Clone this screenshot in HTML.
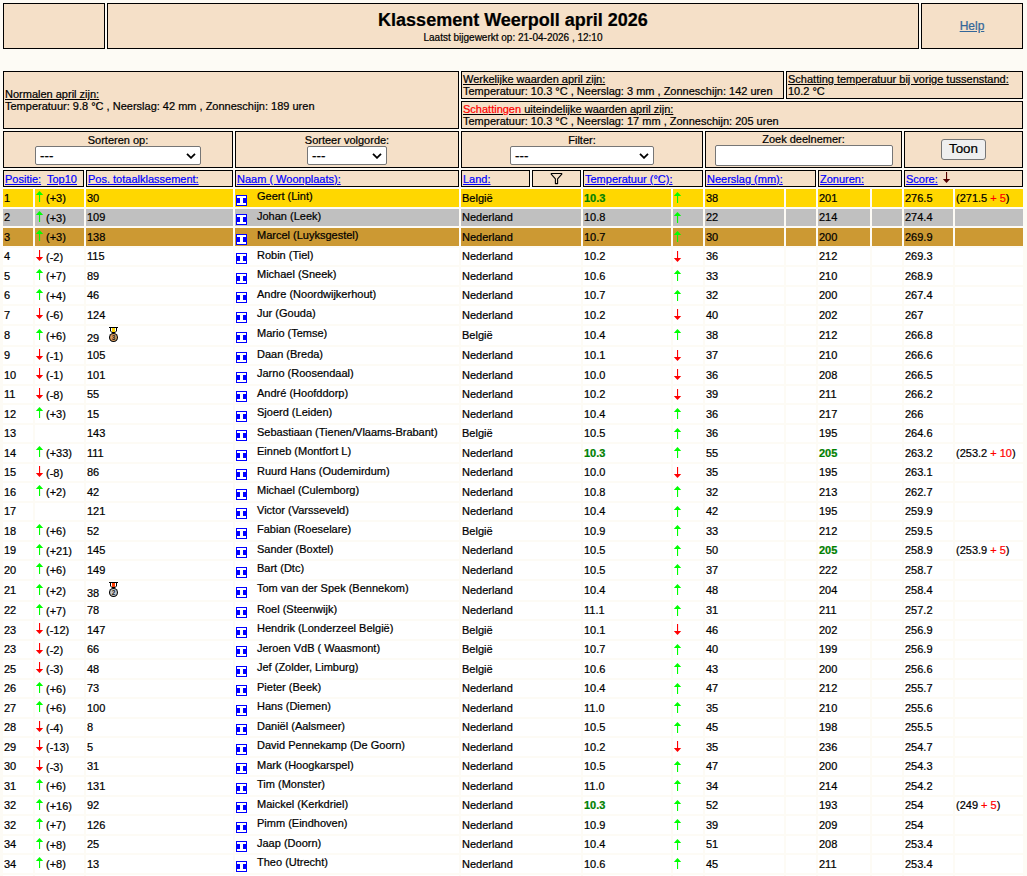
<!DOCTYPE html>
<html lang="nl">
<head>
<meta charset="utf-8">
<title>Klassement Weerpoll april 2026</title>
<style>
html,body{margin:0;padding:0}
body{width:1027px;height:876px;overflow:hidden;position:relative;background:#fdfbf5;font-family:"Liberation Sans",sans-serif;font-size:11px;color:#000;-webkit-text-stroke-width:.22px}
.b{position:absolute;box-sizing:border-box;border:1px solid #000;background:#f5e0c8;white-space:nowrap;overflow:hidden}
.b .x{position:absolute;left:1px;white-space:nowrap;line-height:13px}
u,a{text-decoration:underline}
a{color:#00f}
.ctr{left:0!important;right:0;text-align:center}
.title{font-size:18px;font-weight:bold;line-height:21px}
.sub{font-size:10px;line-height:12px}
.help{font-size:12px;color:#369;line-height:14px}
.red{color:#f00}
.sel{position:absolute;box-sizing:border-box;height:19px;top:14px;border:1px solid #767676;border-radius:2px;background:#fff;font-size:13.333px;line-height:17px;text-align:left;padding-left:4px}
.sel svg{position:absolute;right:4px;top:6px;width:10px;height:6px}
.inp{position:absolute;box-sizing:border-box;border:1px solid #767676;border-radius:2px;background:#fff}
.btn{position:absolute;box-sizing:border-box;border:1px solid #767676;border-radius:3px;background:#efefef;font-size:13.333px;line-height:18px;text-align:center}
/* data rows */
.r{position:absolute;left:0;width:1027px}
.c{position:absolute;top:0;bottom:0;background:#fff;overflow:hidden}
.gold .c{background:#ffd700}
.silv .c{background:#c0c0c0}
.brnz .c{background:#c93}
.t{position:absolute;left:1px;top:var(--o);height:18px;line-height:18px;white-space:nowrap}
.t2{left:11px;top:var(--o2)}
.tn{left:22px;top:var(--on)}
.tm{top:var(--om)}
.g{color:#008000;font-weight:bold}
.rd{color:#f00;font-weight:normal}
.ar{position:absolute;left:1px;top:var(--oa);width:7px;height:11px;overflow:visible}
.ab{top:var(--ob)}
.ic{position:absolute;left:1px;top:var(--oi);width:11px;height:11px}
.md{position:absolute;left:23px;top:var(--omd);width:9px;height:15px}
.k0{left:3px;width:30px}
.k1{left:35px;width:49px}
.k2{left:86px;width:147px}
.k3{left:235px;width:224px}
.k4{left:461px;width:120px}
.k5{left:583px;width:88px}
.k6{left:673px;width:30px}
.k7{left:705px;width:79px}
.k8{left:786px;width:30px}
.k9{left:818px;width:52px}
.k10{left:872px;width:30px}
.k11{left:904px;width:49px}
.k12{left:955px;width:68px}
</style>
</head>
<body>
<!-- title row -->
<div class="b" style="left:3px;top:3px;width:102px;height:46px"></div>
<div class="b" style="left:107px;top:3px;width:812px;height:46px">
  <div class="x ctr title" style="top:10px">Klassement Weerpoll april 2026</div>
  <div class="x ctr sub" style="top:27px">Laatst bijgewerkt op: 21-04-2026 , 12:10</div>
</div>
<div class="b" style="left:921px;top:3px;width:102px;height:46px">
  <div class="x ctr help" style="top:15px"><a class="help">Help</a></div>
</div>
<!-- info row -->
<div class="b" style="left:3px;top:71px;width:456px;height:58px">
  <div class="x" style="top:16px"><u>Normalen april zijn:</u></div>
  <div class="x" style="top:28px">Temperatuur: 9.8 °C , Neerslag: 42 mm , Zonneschijn: 189 uren</div>
</div>
<div class="b" style="left:461px;top:71px;width:323px;height:28px">
  <div class="x" style="top:1px"><u>Werkelijke waarden april zijn:</u></div>
  <div class="x" style="top:13px">Temperatuur: 10.3 °C , Neerslag: 3 mm , Zonneschijn: 142 uren</div>
</div>
<div class="b" style="left:786px;top:71px;width:237px;height:28px">
  <div class="x" style="top:1px"><u>Schatting temperatuur bij vorige tussenstand:</u></div>
  <div class="x" style="top:13px">10.2 °C</div>
</div>
<div class="b" style="left:461px;top:101px;width:562px;height:28px">
  <div class="x" style="top:1px"><u><span class="red">Schattingen</span> uiteindelijke waarden april zijn:</u></div>
  <div class="x" style="top:13px">Temperatuur: 10.3 °C , Neerslag: 17 mm , Zonneschijn: 205 uren</div>
</div>
<!-- controls row -->
<div class="b" style="left:3px;top:131px;width:230px;height:37px">
  <div class="x ctr" style="top:2px">Sorteren op:</div>
  <div class="sel" style="left:31px;width:166px">---<svg viewBox="0 0 10 6"><path d="M1 .8L5 4.8L9 .8" fill="none" stroke="#000" stroke-width="1.8"/></svg></div>
</div>
<div class="b" style="left:235px;top:131px;width:224px;height:37px">
  <div class="x ctr" style="top:2px">Sorteer volgorde:</div>
  <div class="sel" style="left:71px;width:80px">---<svg viewBox="0 0 10 6"><path d="M1 .8L5 4.8L9 .8" fill="none" stroke="#000" stroke-width="1.8"/></svg></div>
</div>
<div class="b" style="left:461px;top:131px;width:242px;height:37px">
  <div class="x ctr" style="top:2px">Filter:</div>
  <div class="sel" style="left:48px;width:144px">---<svg viewBox="0 0 10 6"><path d="M1 .8L5 4.8L9 .8" fill="none" stroke="#000" stroke-width="1.8"/></svg></div>
</div>
<div class="b" style="left:705px;top:131px;width:197px;height:37px">
  <div class="x ctr" style="top:1px">Zoek deelnemer:</div>
  <div class="inp" style="left:9px;top:13px;width:178px;height:21px"></div>
</div>
<div class="b" style="left:904px;top:131px;width:119px;height:37px">
  <div class="btn" style="left:36px;top:7px;width:45px;height:21px">Toon</div>
</div>
<!-- header row -->
<div class="b" style="left:3px;top:170px;width:81px;height:17px"><div class="x" style="top:2px"><a>Positie:</a>&nbsp; <a>Top10</a></div></div>
<div class="b" style="left:86px;top:170px;width:147px;height:17px"><div class="x" style="top:2px"><a>Pos. totaalklassement:</a></div></div>
<div class="b" style="left:235px;top:170px;width:224px;height:17px"><div class="x" style="top:2px"><a>Naam ( Woonplaats):</a></div></div>
<div class="b" style="left:461px;top:170px;width:69px;height:17px"><div class="x" style="top:2px"><a>Land:</a></div></div>
<div class="b" style="left:532px;top:170px;width:49px;height:17px">
  <svg style="position:absolute;left:17px;top:1px;width:13px;height:13px" viewBox="0 0 13 13"><path d="M1.2 1.5h10.6v.7L7.6 6.8v4.8h-2.2v-4.8L1.2 2.2z" fill="none" stroke="#000" stroke-width="1.1" stroke-linejoin="round"/></svg>
</div>
<div class="b" style="left:583px;top:170px;width:120px;height:17px"><div class="x" style="top:2px"><a>Temperatuur (°C):</a></div></div>
<div class="b" style="left:705px;top:170px;width:111px;height:17px"><div class="x" style="top:2px"><a>Neerslag (mm):</a></div></div>
<div class="b" style="left:818px;top:170px;width:84px;height:17px"><div class="x" style="top:2px"><a>Zonuren:</a></div></div>
<div class="b" style="left:904px;top:170px;width:119px;height:17px"><div class="x" style="top:2px"><a>Score:</a></div>
  <svg style="position:absolute;left:38px;top:1px;width:7px;height:11px;overflow:visible" viewBox="0 0 7 11"><path d="M3.5 11L7.2 7H-.2z" fill="#500"/><rect x="3" y="0" width="1.1" height="9" fill="#500"/></svg>
</div>
<div class="r gold" style="top:189px;height:18px;--o:0px;--oa:2px;--o2:0px;--ob:3px;--on:-2px;--oi:6px"><div class="c k0"><span class="t">1</span></div><div class="c k1"><svg class="ar" viewBox="0 0 7 11"><path d="M3.5 0L7.2 4H-.2z" fill="#0f0"/><rect x="3" y="2" width="1.1" height="9" fill="#0f0"/></svg><span class="t t2">(+3)</span></div><div class="c k2"><span class="t">30</span></div><div class="c k3"><svg class="ic" viewBox="0 0 11 11"><rect width="11" height="11" fill="#00f"/><path d="M1 1h9v2h-3v5h3v2h-9v-2h3v-5h-3z" fill="#fff"/></svg><span class="t tn">Geert (Lint)</span></div><div class="c k4"><span class="t">België</span></div><div class="c k5"><span class="t g">10.3</span></div><div class="c k6"><svg class="ar ab" viewBox="0 0 7 11"><path d="M3.5 0L7.2 4H-.2z" fill="#0f0"/><rect x="3" y="2" width="1.1" height="9" fill="#0f0"/></svg></div><div class="c k7"><span class="t">38</span></div><div class="c k8"></div><div class="c k9"><span class="t">201</span></div><div class="c k10"></div><div class="c k11"><span class="t">276.5</span></div><div class="c k12"><span class="t">(271.5 <b class="rd">+ 5</b>)</span></div></div>
<div class="r silv" style="top:209px;height:17px;--o:-1px;--oa:2px;--o2:0px;--ob:3px;--on:-2px;--oi:5px"><div class="c k0"><span class="t">2</span></div><div class="c k1"><svg class="ar" viewBox="0 0 7 11"><path d="M3.5 0L7.2 4H-.2z" fill="#0f0"/><rect x="3" y="2" width="1.1" height="9" fill="#0f0"/></svg><span class="t t2">(+3)</span></div><div class="c k2"><span class="t">109</span></div><div class="c k3"><svg class="ic" viewBox="0 0 11 11"><rect width="11" height="11" fill="#00f"/><path d="M1 1h9v2h-3v5h3v2h-9v-2h3v-5h-3z" fill="#fff"/></svg><span class="t tn">Johan (Leek)</span></div><div class="c k4"><span class="t">Nederland</span></div><div class="c k5"><span class="t">10.8</span></div><div class="c k6"><svg class="ar ab" viewBox="0 0 7 11"><path d="M3.5 0L7.2 4H-.2z" fill="#0f0"/><rect x="3" y="2" width="1.1" height="9" fill="#0f0"/></svg></div><div class="c k7"><span class="t">22</span></div><div class="c k8"></div><div class="c k9"><span class="t">214</span></div><div class="c k10"></div><div class="c k11"><span class="t">274.4</span></div><div class="c k12"></div></div>
<div class="r brnz" style="top:228px;height:18px;--o:0px;--oa:2px;--o2:0px;--ob:3px;--on:-2px;--oi:6px"><div class="c k0"><span class="t">3</span></div><div class="c k1"><svg class="ar" viewBox="0 0 7 11"><path d="M3.5 0L7.2 4H-.2z" fill="#0f0"/><rect x="3" y="2" width="1.1" height="9" fill="#0f0"/></svg><span class="t t2">(+3)</span></div><div class="c k2"><span class="t">138</span></div><div class="c k3"><svg class="ic" viewBox="0 0 11 11"><rect width="11" height="11" fill="#00f"/><path d="M1 1h9v2h-3v5h3v2h-9v-2h3v-5h-3z" fill="#fff"/></svg><span class="t tn">Marcel (Luyksgestel)</span></div><div class="c k4"><span class="t">Nederland</span></div><div class="c k5"><span class="t">10.7</span></div><div class="c k6"><svg class="ar ab" viewBox="0 0 7 11"><path d="M3.5 0L7.2 4H-.2z" fill="#0f0"/><rect x="3" y="2" width="1.1" height="9" fill="#0f0"/></svg></div><div class="c k7"><span class="t">30</span></div><div class="c k8"></div><div class="c k9"><span class="t">200</span></div><div class="c k10"></div><div class="c k11"><span class="t">269.9</span></div><div class="c k12"></div></div>
<div class="r" style="top:248px;height:17px;--o:-1px;--oa:2px;--o2:0px;--ob:3px;--on:-2px;--oi:5px"><div class="c k0"><span class="t">4</span></div><div class="c k1"><svg class="ar" viewBox="0 0 7 11"><path d="M3.5 11L7.2 7H-.2z" fill="#f00"/><rect x="3" y="0" width="1.1" height="9" fill="#f00"/></svg><span class="t t2">(-2)</span></div><div class="c k2"><span class="t">115</span></div><div class="c k3"><svg class="ic" viewBox="0 0 11 11"><rect width="11" height="11" fill="#00f"/><path d="M1 1h9v2h-3v5h3v2h-9v-2h3v-5h-3z" fill="#fff"/></svg><span class="t tn">Robin (Tiel)</span></div><div class="c k4"><span class="t">Nederland</span></div><div class="c k5"><span class="t">10.2</span></div><div class="c k6"><svg class="ar ab" viewBox="0 0 7 11"><path d="M3.5 11L7.2 7H-.2z" fill="#f00"/><rect x="3" y="0" width="1.1" height="9" fill="#f00"/></svg></div><div class="c k7"><span class="t">36</span></div><div class="c k8"></div><div class="c k9"><span class="t">212</span></div><div class="c k10"></div><div class="c k11"><span class="t">269.3</span></div><div class="c k12"></div></div>
<div class="r" style="top:267px;height:18px;--o:0px;--oa:2px;--o2:0px;--ob:3px;--on:-2px;--oi:6px"><div class="c k0"><span class="t">5</span></div><div class="c k1"><svg class="ar" viewBox="0 0 7 11"><path d="M3.5 0L7.2 4H-.2z" fill="#0f0"/><rect x="3" y="2" width="1.1" height="9" fill="#0f0"/></svg><span class="t t2">(+7)</span></div><div class="c k2"><span class="t">89</span></div><div class="c k3"><svg class="ic" viewBox="0 0 11 11"><rect width="11" height="11" fill="#00f"/><path d="M1 1h9v2h-3v5h3v2h-9v-2h3v-5h-3z" fill="#fff"/></svg><span class="t tn">Michael (Sneek)</span></div><div class="c k4"><span class="t">Nederland</span></div><div class="c k5"><span class="t">10.6</span></div><div class="c k6"><svg class="ar ab" viewBox="0 0 7 11"><path d="M3.5 0L7.2 4H-.2z" fill="#0f0"/><rect x="3" y="2" width="1.1" height="9" fill="#0f0"/></svg></div><div class="c k7"><span class="t">33</span></div><div class="c k8"></div><div class="c k9"><span class="t">210</span></div><div class="c k10"></div><div class="c k11"><span class="t">268.9</span></div><div class="c k12"></div></div>
<div class="r" style="top:287px;height:17px;--o:-1px;--oa:2px;--o2:0px;--ob:3px;--on:-2px;--oi:5px"><div class="c k0"><span class="t">6</span></div><div class="c k1"><svg class="ar" viewBox="0 0 7 11"><path d="M3.5 0L7.2 4H-.2z" fill="#0f0"/><rect x="3" y="2" width="1.1" height="9" fill="#0f0"/></svg><span class="t t2">(+4)</span></div><div class="c k2"><span class="t">46</span></div><div class="c k3"><svg class="ic" viewBox="0 0 11 11"><rect width="11" height="11" fill="#00f"/><path d="M1 1h9v2h-3v5h3v2h-9v-2h3v-5h-3z" fill="#fff"/></svg><span class="t tn">Andre (Noordwijkerhout)</span></div><div class="c k4"><span class="t">Nederland</span></div><div class="c k5"><span class="t">10.7</span></div><div class="c k6"><svg class="ar ab" viewBox="0 0 7 11"><path d="M3.5 0L7.2 4H-.2z" fill="#0f0"/><rect x="3" y="2" width="1.1" height="9" fill="#0f0"/></svg></div><div class="c k7"><span class="t">32</span></div><div class="c k8"></div><div class="c k9"><span class="t">200</span></div><div class="c k10"></div><div class="c k11"><span class="t">267.4</span></div><div class="c k12"></div></div>
<div class="r" style="top:306px;height:18px;--o:0px;--oa:2px;--o2:0px;--ob:3px;--on:-2px;--oi:6px"><div class="c k0"><span class="t">7</span></div><div class="c k1"><svg class="ar" viewBox="0 0 7 11"><path d="M3.5 11L7.2 7H-.2z" fill="#f00"/><rect x="3" y="0" width="1.1" height="9" fill="#f00"/></svg><span class="t t2">(-6)</span></div><div class="c k2"><span class="t">124</span></div><div class="c k3"><svg class="ic" viewBox="0 0 11 11"><rect width="11" height="11" fill="#00f"/><path d="M1 1h9v2h-3v5h3v2h-9v-2h3v-5h-3z" fill="#fff"/></svg><span class="t tn">Jur (Gouda)</span></div><div class="c k4"><span class="t">Nederland</span></div><div class="c k5"><span class="t">10.2</span></div><div class="c k6"><svg class="ar ab" viewBox="0 0 7 11"><path d="M3.5 11L7.2 7H-.2z" fill="#f00"/><rect x="3" y="0" width="1.1" height="9" fill="#f00"/></svg></div><div class="c k7"><span class="t">40</span></div><div class="c k8"></div><div class="c k9"><span class="t">202</span></div><div class="c k10"></div><div class="c k11"><span class="t">267</span></div><div class="c k12"></div></div>
<div class="r" style="top:326px;height:19px;--o:0px;--oa:3px;--o2:1px;--ob:3px;--on:-2px;--oi:6px;--om:3px;--omd:1px"><div class="c k0"><span class="t">8</span></div><div class="c k1"><svg class="ar" viewBox="0 0 7 11"><path d="M3.5 0L7.2 4H-.2z" fill="#0f0"/><rect x="3" y="2" width="1.1" height="9" fill="#0f0"/></svg><span class="t t2">(+6)</span></div><div class="c k2"><span class="t tm">29</span><svg class="md" viewBox="0 0 9 15"><rect width="9" height="1" fill="#000"/><path d="M1 1h7v3l-2 2h-3l-2-2z" fill="#000"/><path d="M2 1h5v3l-1 1h-3l-1-1z" fill="#fff"/><rect x="3" y="1" width="3" height="4" fill="#ffd800"/><circle cx="4.5" cy="10.5" r="4.5" fill="#000"/><circle cx="4.5" cy="10.5" r="3.4" fill="#dca060"/><text x="4.5" y="12.8" font-size="6.5" font-weight="bold" text-anchor="middle" font-family="Liberation Sans" fill="#222">3</text></svg></div><div class="c k3"><svg class="ic" viewBox="0 0 11 11"><rect width="11" height="11" fill="#00f"/><path d="M1 1h9v2h-3v5h3v2h-9v-2h3v-5h-3z" fill="#fff"/></svg><span class="t tn">Mario (Temse)</span></div><div class="c k4"><span class="t">België</span></div><div class="c k5"><span class="t">10.4</span></div><div class="c k6"><svg class="ar ab" viewBox="0 0 7 11"><path d="M3.5 0L7.2 4H-.2z" fill="#0f0"/><rect x="3" y="2" width="1.1" height="9" fill="#0f0"/></svg></div><div class="c k7"><span class="t">38</span></div><div class="c k8"></div><div class="c k9"><span class="t">212</span></div><div class="c k10"></div><div class="c k11"><span class="t">266.8</span></div><div class="c k12"></div></div>
<div class="r" style="top:347px;height:17px;--o:-1px;--oa:2px;--o2:0px;--ob:3px;--on:-2px;--oi:5px"><div class="c k0"><span class="t">9</span></div><div class="c k1"><svg class="ar" viewBox="0 0 7 11"><path d="M3.5 11L7.2 7H-.2z" fill="#f00"/><rect x="3" y="0" width="1.1" height="9" fill="#f00"/></svg><span class="t t2">(-1)</span></div><div class="c k2"><span class="t">105</span></div><div class="c k3"><svg class="ic" viewBox="0 0 11 11"><rect width="11" height="11" fill="#00f"/><path d="M1 1h9v2h-3v5h3v2h-9v-2h3v-5h-3z" fill="#fff"/></svg><span class="t tn">Daan (Breda)</span></div><div class="c k4"><span class="t">Nederland</span></div><div class="c k5"><span class="t">10.1</span></div><div class="c k6"><svg class="ar ab" viewBox="0 0 7 11"><path d="M3.5 11L7.2 7H-.2z" fill="#f00"/><rect x="3" y="0" width="1.1" height="9" fill="#f00"/></svg></div><div class="c k7"><span class="t">37</span></div><div class="c k8"></div><div class="c k9"><span class="t">210</span></div><div class="c k10"></div><div class="c k11"><span class="t">266.6</span></div><div class="c k12"></div></div>
<div class="r" style="top:366px;height:18px;--o:0px;--oa:2px;--o2:0px;--ob:3px;--on:-2px;--oi:6px"><div class="c k0"><span class="t">10</span></div><div class="c k1"><svg class="ar" viewBox="0 0 7 11"><path d="M3.5 11L7.2 7H-.2z" fill="#f00"/><rect x="3" y="0" width="1.1" height="9" fill="#f00"/></svg><span class="t t2">(-1)</span></div><div class="c k2"><span class="t">101</span></div><div class="c k3"><svg class="ic" viewBox="0 0 11 11"><rect width="11" height="11" fill="#00f"/><path d="M1 1h9v2h-3v5h3v2h-9v-2h3v-5h-3z" fill="#fff"/></svg><span class="t tn">Jarno (Roosendaal)</span></div><div class="c k4"><span class="t">Nederland</span></div><div class="c k5"><span class="t">10.0</span></div><div class="c k6"><svg class="ar ab" viewBox="0 0 7 11"><path d="M3.5 11L7.2 7H-.2z" fill="#f00"/><rect x="3" y="0" width="1.1" height="9" fill="#f00"/></svg></div><div class="c k7"><span class="t">36</span></div><div class="c k8"></div><div class="c k9"><span class="t">208</span></div><div class="c k10"></div><div class="c k11"><span class="t">266.5</span></div><div class="c k12"></div></div>
<div class="r" style="top:386px;height:17px;--o:-1px;--oa:2px;--o2:0px;--ob:3px;--on:-2px;--oi:5px"><div class="c k0"><span class="t">11</span></div><div class="c k1"><svg class="ar" viewBox="0 0 7 11"><path d="M3.5 11L7.2 7H-.2z" fill="#f00"/><rect x="3" y="0" width="1.1" height="9" fill="#f00"/></svg><span class="t t2">(-8)</span></div><div class="c k2"><span class="t">55</span></div><div class="c k3"><svg class="ic" viewBox="0 0 11 11"><rect width="11" height="11" fill="#00f"/><path d="M1 1h9v2h-3v5h3v2h-9v-2h3v-5h-3z" fill="#fff"/></svg><span class="t tn">André (Hoofddorp)</span></div><div class="c k4"><span class="t">Nederland</span></div><div class="c k5"><span class="t">10.2</span></div><div class="c k6"><svg class="ar ab" viewBox="0 0 7 11"><path d="M3.5 11L7.2 7H-.2z" fill="#f00"/><rect x="3" y="0" width="1.1" height="9" fill="#f00"/></svg></div><div class="c k7"><span class="t">39</span></div><div class="c k8"></div><div class="c k9"><span class="t">211</span></div><div class="c k10"></div><div class="c k11"><span class="t">266.2</span></div><div class="c k12"></div></div>
<div class="r" style="top:405px;height:18px;--o:0px;--oa:2px;--o2:0px;--ob:3px;--on:-2px;--oi:6px"><div class="c k0"><span class="t">12</span></div><div class="c k1"><svg class="ar" viewBox="0 0 7 11"><path d="M3.5 0L7.2 4H-.2z" fill="#0f0"/><rect x="3" y="2" width="1.1" height="9" fill="#0f0"/></svg><span class="t t2">(+3)</span></div><div class="c k2"><span class="t">15</span></div><div class="c k3"><svg class="ic" viewBox="0 0 11 11"><rect width="11" height="11" fill="#00f"/><path d="M1 1h9v2h-3v5h3v2h-9v-2h3v-5h-3z" fill="#fff"/></svg><span class="t tn">Sjoerd (Leiden)</span></div><div class="c k4"><span class="t">Nederland</span></div><div class="c k5"><span class="t">10.4</span></div><div class="c k6"><svg class="ar ab" viewBox="0 0 7 11"><path d="M3.5 0L7.2 4H-.2z" fill="#0f0"/><rect x="3" y="2" width="1.1" height="9" fill="#0f0"/></svg></div><div class="c k7"><span class="t">36</span></div><div class="c k8"></div><div class="c k9"><span class="t">217</span></div><div class="c k10"></div><div class="c k11"><span class="t">266</span></div><div class="c k12"></div></div>
<div class="r" style="top:425px;height:17px;--o:-1px;--oa:2px;--o2:0px;--ob:3px;--on:-2px;--oi:5px"><div class="c k0"><span class="t">13</span></div><div class="c k1"></div><div class="c k2"><span class="t">143</span></div><div class="c k3"><svg class="ic" viewBox="0 0 11 11"><rect width="11" height="11" fill="#00f"/><path d="M1 1h9v2h-3v5h3v2h-9v-2h3v-5h-3z" fill="#fff"/></svg><span class="t tn">Sebastiaan (Tienen/Vlaams-Brabant)</span></div><div class="c k4"><span class="t">België</span></div><div class="c k5"><span class="t">10.5</span></div><div class="c k6"><svg class="ar ab" viewBox="0 0 7 11"><path d="M3.5 0L7.2 4H-.2z" fill="#0f0"/><rect x="3" y="2" width="1.1" height="9" fill="#0f0"/></svg></div><div class="c k7"><span class="t">36</span></div><div class="c k8"></div><div class="c k9"><span class="t">195</span></div><div class="c k10"></div><div class="c k11"><span class="t">264.6</span></div><div class="c k12"></div></div>
<div class="r" style="top:444px;height:18px;--o:0px;--oa:2px;--o2:0px;--ob:3px;--on:-2px;--oi:6px"><div class="c k0"><span class="t">14</span></div><div class="c k1"><svg class="ar" viewBox="0 0 7 11"><path d="M3.5 0L7.2 4H-.2z" fill="#0f0"/><rect x="3" y="2" width="1.1" height="9" fill="#0f0"/></svg><span class="t t2">(+33)</span></div><div class="c k2"><span class="t">111</span></div><div class="c k3"><svg class="ic" viewBox="0 0 11 11"><rect width="11" height="11" fill="#00f"/><path d="M1 1h9v2h-3v5h3v2h-9v-2h3v-5h-3z" fill="#fff"/></svg><span class="t tn">Einneb (Montfort L)</span></div><div class="c k4"><span class="t">Nederland</span></div><div class="c k5"><span class="t g">10.3</span></div><div class="c k6"><svg class="ar ab" viewBox="0 0 7 11"><path d="M3.5 0L7.2 4H-.2z" fill="#0f0"/><rect x="3" y="2" width="1.1" height="9" fill="#0f0"/></svg></div><div class="c k7"><span class="t">55</span></div><div class="c k8"></div><div class="c k9"><span class="t g">205</span></div><div class="c k10"></div><div class="c k11"><span class="t">263.2</span></div><div class="c k12"><span class="t">(253.2 <b class="rd">+ 10</b>)</span></div></div>
<div class="r" style="top:464px;height:17px;--o:-1px;--oa:2px;--o2:0px;--ob:3px;--on:-2px;--oi:5px"><div class="c k0"><span class="t">15</span></div><div class="c k1"><svg class="ar" viewBox="0 0 7 11"><path d="M3.5 11L7.2 7H-.2z" fill="#f00"/><rect x="3" y="0" width="1.1" height="9" fill="#f00"/></svg><span class="t t2">(-8)</span></div><div class="c k2"><span class="t">86</span></div><div class="c k3"><svg class="ic" viewBox="0 0 11 11"><rect width="11" height="11" fill="#00f"/><path d="M1 1h9v2h-3v5h3v2h-9v-2h3v-5h-3z" fill="#fff"/></svg><span class="t tn">Ruurd Hans (Oudemirdum)</span></div><div class="c k4"><span class="t">Nederland</span></div><div class="c k5"><span class="t">10.0</span></div><div class="c k6"><svg class="ar ab" viewBox="0 0 7 11"><path d="M3.5 11L7.2 7H-.2z" fill="#f00"/><rect x="3" y="0" width="1.1" height="9" fill="#f00"/></svg></div><div class="c k7"><span class="t">35</span></div><div class="c k8"></div><div class="c k9"><span class="t">195</span></div><div class="c k10"></div><div class="c k11"><span class="t">263.1</span></div><div class="c k12"></div></div>
<div class="r" style="top:483px;height:18px;--o:0px;--oa:2px;--o2:0px;--ob:3px;--on:-2px;--oi:6px"><div class="c k0"><span class="t">16</span></div><div class="c k1"><svg class="ar" viewBox="0 0 7 11"><path d="M3.5 0L7.2 4H-.2z" fill="#0f0"/><rect x="3" y="2" width="1.1" height="9" fill="#0f0"/></svg><span class="t t2">(+2)</span></div><div class="c k2"><span class="t">42</span></div><div class="c k3"><svg class="ic" viewBox="0 0 11 11"><rect width="11" height="11" fill="#00f"/><path d="M1 1h9v2h-3v5h3v2h-9v-2h3v-5h-3z" fill="#fff"/></svg><span class="t tn">Michael (Culemborg)</span></div><div class="c k4"><span class="t">Nederland</span></div><div class="c k5"><span class="t">10.8</span></div><div class="c k6"><svg class="ar ab" viewBox="0 0 7 11"><path d="M3.5 0L7.2 4H-.2z" fill="#0f0"/><rect x="3" y="2" width="1.1" height="9" fill="#0f0"/></svg></div><div class="c k7"><span class="t">32</span></div><div class="c k8"></div><div class="c k9"><span class="t">213</span></div><div class="c k10"></div><div class="c k11"><span class="t">262.7</span></div><div class="c k12"></div></div>
<div class="r" style="top:503px;height:17px;--o:-1px;--oa:2px;--o2:0px;--ob:3px;--on:-2px;--oi:5px"><div class="c k0"><span class="t">17</span></div><div class="c k1"></div><div class="c k2"><span class="t">121</span></div><div class="c k3"><svg class="ic" viewBox="0 0 11 11"><rect width="11" height="11" fill="#00f"/><path d="M1 1h9v2h-3v5h3v2h-9v-2h3v-5h-3z" fill="#fff"/></svg><span class="t tn">Victor (Varsseveld)</span></div><div class="c k4"><span class="t">Nederland</span></div><div class="c k5"><span class="t">10.4</span></div><div class="c k6"><svg class="ar ab" viewBox="0 0 7 11"><path d="M3.5 0L7.2 4H-.2z" fill="#0f0"/><rect x="3" y="2" width="1.1" height="9" fill="#0f0"/></svg></div><div class="c k7"><span class="t">42</span></div><div class="c k8"></div><div class="c k9"><span class="t">195</span></div><div class="c k10"></div><div class="c k11"><span class="t">259.9</span></div><div class="c k12"></div></div>
<div class="r" style="top:522px;height:18px;--o:0px;--oa:2px;--o2:0px;--ob:3px;--on:-2px;--oi:6px"><div class="c k0"><span class="t">18</span></div><div class="c k1"><svg class="ar" viewBox="0 0 7 11"><path d="M3.5 0L7.2 4H-.2z" fill="#0f0"/><rect x="3" y="2" width="1.1" height="9" fill="#0f0"/></svg><span class="t t2">(+6)</span></div><div class="c k2"><span class="t">52</span></div><div class="c k3"><svg class="ic" viewBox="0 0 11 11"><rect width="11" height="11" fill="#00f"/><path d="M1 1h9v2h-3v5h3v2h-9v-2h3v-5h-3z" fill="#fff"/></svg><span class="t tn">Fabian (Roeselare)</span></div><div class="c k4"><span class="t">België</span></div><div class="c k5"><span class="t">10.9</span></div><div class="c k6"><svg class="ar ab" viewBox="0 0 7 11"><path d="M3.5 0L7.2 4H-.2z" fill="#0f0"/><rect x="3" y="2" width="1.1" height="9" fill="#0f0"/></svg></div><div class="c k7"><span class="t">33</span></div><div class="c k8"></div><div class="c k9"><span class="t">212</span></div><div class="c k10"></div><div class="c k11"><span class="t">259.5</span></div><div class="c k12"></div></div>
<div class="r" style="top:542px;height:17px;--o:-1px;--oa:2px;--o2:0px;--ob:3px;--on:-2px;--oi:5px"><div class="c k0"><span class="t">19</span></div><div class="c k1"><svg class="ar" viewBox="0 0 7 11"><path d="M3.5 0L7.2 4H-.2z" fill="#0f0"/><rect x="3" y="2" width="1.1" height="9" fill="#0f0"/></svg><span class="t t2">(+21)</span></div><div class="c k2"><span class="t">145</span></div><div class="c k3"><svg class="ic" viewBox="0 0 11 11"><rect width="11" height="11" fill="#00f"/><path d="M1 1h9v2h-3v5h3v2h-9v-2h3v-5h-3z" fill="#fff"/></svg><span class="t tn">Sander (Boxtel)</span></div><div class="c k4"><span class="t">Nederland</span></div><div class="c k5"><span class="t">10.5</span></div><div class="c k6"><svg class="ar ab" viewBox="0 0 7 11"><path d="M3.5 0L7.2 4H-.2z" fill="#0f0"/><rect x="3" y="2" width="1.1" height="9" fill="#0f0"/></svg></div><div class="c k7"><span class="t">50</span></div><div class="c k8"></div><div class="c k9"><span class="t g">205</span></div><div class="c k10"></div><div class="c k11"><span class="t">258.9</span></div><div class="c k12"><span class="t">(253.9 <b class="rd">+ 5</b>)</span></div></div>
<div class="r" style="top:561px;height:18px;--o:0px;--oa:2px;--o2:0px;--ob:3px;--on:-2px;--oi:6px"><div class="c k0"><span class="t">20</span></div><div class="c k1"><svg class="ar" viewBox="0 0 7 11"><path d="M3.5 0L7.2 4H-.2z" fill="#0f0"/><rect x="3" y="2" width="1.1" height="9" fill="#0f0"/></svg><span class="t t2">(+6)</span></div><div class="c k2"><span class="t">149</span></div><div class="c k3"><svg class="ic" viewBox="0 0 11 11"><rect width="11" height="11" fill="#00f"/><path d="M1 1h9v2h-3v5h3v2h-9v-2h3v-5h-3z" fill="#fff"/></svg><span class="t tn">Bart (Dtc)</span></div><div class="c k4"><span class="t">Nederland</span></div><div class="c k5"><span class="t">10.5</span></div><div class="c k6"><svg class="ar ab" viewBox="0 0 7 11"><path d="M3.5 0L7.2 4H-.2z" fill="#0f0"/><rect x="3" y="2" width="1.1" height="9" fill="#0f0"/></svg></div><div class="c k7"><span class="t">37</span></div><div class="c k8"></div><div class="c k9"><span class="t">222</span></div><div class="c k10"></div><div class="c k11"><span class="t">258.7</span></div><div class="c k12"></div></div>
<div class="r" style="top:581px;height:19px;--o:0px;--oa:3px;--o2:1px;--ob:3px;--on:-2px;--oi:6px;--om:3px;--omd:1px"><div class="c k0"><span class="t">21</span></div><div class="c k1"><svg class="ar" viewBox="0 0 7 11"><path d="M3.5 0L7.2 4H-.2z" fill="#0f0"/><rect x="3" y="2" width="1.1" height="9" fill="#0f0"/></svg><span class="t t2">(+2)</span></div><div class="c k2"><span class="t tm">38</span><svg class="md" viewBox="0 0 9 15"><rect width="9" height="1" fill="#000"/><path d="M1 1h7v3l-2 2h-3l-2-2z" fill="#000"/><path d="M2 1h5v3l-1 1h-3l-1-1z" fill="#fff"/><rect x="3" y="1" width="3" height="4" fill="#ff3c00"/><circle cx="4.5" cy="10.5" r="4.5" fill="#000"/><circle cx="4.5" cy="10.5" r="3.4" fill="#c4c8cc"/><text x="4.5" y="12.8" font-size="6.5" font-weight="bold" text-anchor="middle" font-family="Liberation Sans" fill="#222">2</text></svg></div><div class="c k3"><svg class="ic" viewBox="0 0 11 11"><rect width="11" height="11" fill="#00f"/><path d="M1 1h9v2h-3v5h3v2h-9v-2h3v-5h-3z" fill="#fff"/></svg><span class="t tn">Tom van der Spek (Bennekom)</span></div><div class="c k4"><span class="t">Nederland</span></div><div class="c k5"><span class="t">10.4</span></div><div class="c k6"><svg class="ar ab" viewBox="0 0 7 11"><path d="M3.5 0L7.2 4H-.2z" fill="#0f0"/><rect x="3" y="2" width="1.1" height="9" fill="#0f0"/></svg></div><div class="c k7"><span class="t">48</span></div><div class="c k8"></div><div class="c k9"><span class="t">204</span></div><div class="c k10"></div><div class="c k11"><span class="t">258.4</span></div><div class="c k12"></div></div>
<div class="r" style="top:602px;height:17px;--o:-1px;--oa:2px;--o2:0px;--ob:3px;--on:-2px;--oi:5px"><div class="c k0"><span class="t">22</span></div><div class="c k1"><svg class="ar" viewBox="0 0 7 11"><path d="M3.5 0L7.2 4H-.2z" fill="#0f0"/><rect x="3" y="2" width="1.1" height="9" fill="#0f0"/></svg><span class="t t2">(+7)</span></div><div class="c k2"><span class="t">78</span></div><div class="c k3"><svg class="ic" viewBox="0 0 11 11"><rect width="11" height="11" fill="#00f"/><path d="M1 1h9v2h-3v5h3v2h-9v-2h3v-5h-3z" fill="#fff"/></svg><span class="t tn">Roel (Steenwijk)</span></div><div class="c k4"><span class="t">Nederland</span></div><div class="c k5"><span class="t">11.1</span></div><div class="c k6"><svg class="ar ab" viewBox="0 0 7 11"><path d="M3.5 0L7.2 4H-.2z" fill="#0f0"/><rect x="3" y="2" width="1.1" height="9" fill="#0f0"/></svg></div><div class="c k7"><span class="t">31</span></div><div class="c k8"></div><div class="c k9"><span class="t">211</span></div><div class="c k10"></div><div class="c k11"><span class="t">257.2</span></div><div class="c k12"></div></div>
<div class="r" style="top:621px;height:18px;--o:0px;--oa:2px;--o2:0px;--ob:3px;--on:-2px;--oi:6px"><div class="c k0"><span class="t">23</span></div><div class="c k1"><svg class="ar" viewBox="0 0 7 11"><path d="M3.5 11L7.2 7H-.2z" fill="#f00"/><rect x="3" y="0" width="1.1" height="9" fill="#f00"/></svg><span class="t t2">(-12)</span></div><div class="c k2"><span class="t">147</span></div><div class="c k3"><svg class="ic" viewBox="0 0 11 11"><rect width="11" height="11" fill="#00f"/><path d="M1 1h9v2h-3v5h3v2h-9v-2h3v-5h-3z" fill="#fff"/></svg><span class="t tn">Hendrik (Londerzeel België)</span></div><div class="c k4"><span class="t">België</span></div><div class="c k5"><span class="t">10.1</span></div><div class="c k6"><svg class="ar ab" viewBox="0 0 7 11"><path d="M3.5 11L7.2 7H-.2z" fill="#f00"/><rect x="3" y="0" width="1.1" height="9" fill="#f00"/></svg></div><div class="c k7"><span class="t">46</span></div><div class="c k8"></div><div class="c k9"><span class="t">202</span></div><div class="c k10"></div><div class="c k11"><span class="t">256.9</span></div><div class="c k12"></div></div>
<div class="r" style="top:641px;height:17px;--o:-1px;--oa:2px;--o2:0px;--ob:3px;--on:-2px;--oi:5px"><div class="c k0"><span class="t">23</span></div><div class="c k1"><svg class="ar" viewBox="0 0 7 11"><path d="M3.5 11L7.2 7H-.2z" fill="#f00"/><rect x="3" y="0" width="1.1" height="9" fill="#f00"/></svg><span class="t t2">(-2)</span></div><div class="c k2"><span class="t">66</span></div><div class="c k3"><svg class="ic" viewBox="0 0 11 11"><rect width="11" height="11" fill="#00f"/><path d="M1 1h9v2h-3v5h3v2h-9v-2h3v-5h-3z" fill="#fff"/></svg><span class="t tn">Jeroen VdB ( Waasmont)</span></div><div class="c k4"><span class="t">België</span></div><div class="c k5"><span class="t">10.7</span></div><div class="c k6"><svg class="ar ab" viewBox="0 0 7 11"><path d="M3.5 0L7.2 4H-.2z" fill="#0f0"/><rect x="3" y="2" width="1.1" height="9" fill="#0f0"/></svg></div><div class="c k7"><span class="t">40</span></div><div class="c k8"></div><div class="c k9"><span class="t">199</span></div><div class="c k10"></div><div class="c k11"><span class="t">256.9</span></div><div class="c k12"></div></div>
<div class="r" style="top:660px;height:18px;--o:0px;--oa:2px;--o2:0px;--ob:3px;--on:-2px;--oi:6px"><div class="c k0"><span class="t">25</span></div><div class="c k1"><svg class="ar" viewBox="0 0 7 11"><path d="M3.5 11L7.2 7H-.2z" fill="#f00"/><rect x="3" y="0" width="1.1" height="9" fill="#f00"/></svg><span class="t t2">(-3)</span></div><div class="c k2"><span class="t">48</span></div><div class="c k3"><svg class="ic" viewBox="0 0 11 11"><rect width="11" height="11" fill="#00f"/><path d="M1 1h9v2h-3v5h3v2h-9v-2h3v-5h-3z" fill="#fff"/></svg><span class="t tn">Jef (Zolder, Limburg)</span></div><div class="c k4"><span class="t">België</span></div><div class="c k5"><span class="t">10.6</span></div><div class="c k6"><svg class="ar ab" viewBox="0 0 7 11"><path d="M3.5 0L7.2 4H-.2z" fill="#0f0"/><rect x="3" y="2" width="1.1" height="9" fill="#0f0"/></svg></div><div class="c k7"><span class="t">43</span></div><div class="c k8"></div><div class="c k9"><span class="t">200</span></div><div class="c k10"></div><div class="c k11"><span class="t">256.6</span></div><div class="c k12"></div></div>
<div class="r" style="top:680px;height:17px;--o:-1px;--oa:2px;--o2:0px;--ob:3px;--on:-2px;--oi:5px"><div class="c k0"><span class="t">26</span></div><div class="c k1"><svg class="ar" viewBox="0 0 7 11"><path d="M3.5 0L7.2 4H-.2z" fill="#0f0"/><rect x="3" y="2" width="1.1" height="9" fill="#0f0"/></svg><span class="t t2">(+6)</span></div><div class="c k2"><span class="t">73</span></div><div class="c k3"><svg class="ic" viewBox="0 0 11 11"><rect width="11" height="11" fill="#00f"/><path d="M1 1h9v2h-3v5h3v2h-9v-2h3v-5h-3z" fill="#fff"/></svg><span class="t tn">Pieter (Beek)</span></div><div class="c k4"><span class="t">Nederland</span></div><div class="c k5"><span class="t">10.4</span></div><div class="c k6"><svg class="ar ab" viewBox="0 0 7 11"><path d="M3.5 0L7.2 4H-.2z" fill="#0f0"/><rect x="3" y="2" width="1.1" height="9" fill="#0f0"/></svg></div><div class="c k7"><span class="t">47</span></div><div class="c k8"></div><div class="c k9"><span class="t">212</span></div><div class="c k10"></div><div class="c k11"><span class="t">255.7</span></div><div class="c k12"></div></div>
<div class="r" style="top:699px;height:18px;--o:0px;--oa:2px;--o2:0px;--ob:3px;--on:-2px;--oi:6px"><div class="c k0"><span class="t">27</span></div><div class="c k1"><svg class="ar" viewBox="0 0 7 11"><path d="M3.5 0L7.2 4H-.2z" fill="#0f0"/><rect x="3" y="2" width="1.1" height="9" fill="#0f0"/></svg><span class="t t2">(+6)</span></div><div class="c k2"><span class="t">100</span></div><div class="c k3"><svg class="ic" viewBox="0 0 11 11"><rect width="11" height="11" fill="#00f"/><path d="M1 1h9v2h-3v5h3v2h-9v-2h3v-5h-3z" fill="#fff"/></svg><span class="t tn">Hans (Diemen)</span></div><div class="c k4"><span class="t">Nederland</span></div><div class="c k5"><span class="t">11.0</span></div><div class="c k6"><svg class="ar ab" viewBox="0 0 7 11"><path d="M3.5 0L7.2 4H-.2z" fill="#0f0"/><rect x="3" y="2" width="1.1" height="9" fill="#0f0"/></svg></div><div class="c k7"><span class="t">35</span></div><div class="c k8"></div><div class="c k9"><span class="t">210</span></div><div class="c k10"></div><div class="c k11"><span class="t">255.6</span></div><div class="c k12"></div></div>
<div class="r" style="top:719px;height:17px;--o:-1px;--oa:2px;--o2:0px;--ob:3px;--on:-2px;--oi:5px"><div class="c k0"><span class="t">28</span></div><div class="c k1"><svg class="ar" viewBox="0 0 7 11"><path d="M3.5 11L7.2 7H-.2z" fill="#f00"/><rect x="3" y="0" width="1.1" height="9" fill="#f00"/></svg><span class="t t2">(-4)</span></div><div class="c k2"><span class="t">8</span></div><div class="c k3"><svg class="ic" viewBox="0 0 11 11"><rect width="11" height="11" fill="#00f"/><path d="M1 1h9v2h-3v5h3v2h-9v-2h3v-5h-3z" fill="#fff"/></svg><span class="t tn">Daniël (Aalsmeer)</span></div><div class="c k4"><span class="t">Nederland</span></div><div class="c k5"><span class="t">10.5</span></div><div class="c k6"><svg class="ar ab" viewBox="0 0 7 11"><path d="M3.5 0L7.2 4H-.2z" fill="#0f0"/><rect x="3" y="2" width="1.1" height="9" fill="#0f0"/></svg></div><div class="c k7"><span class="t">45</span></div><div class="c k8"></div><div class="c k9"><span class="t">198</span></div><div class="c k10"></div><div class="c k11"><span class="t">255.5</span></div><div class="c k12"></div></div>
<div class="r" style="top:738px;height:18px;--o:0px;--oa:2px;--o2:0px;--ob:3px;--on:-2px;--oi:6px"><div class="c k0"><span class="t">29</span></div><div class="c k1"><svg class="ar" viewBox="0 0 7 11"><path d="M3.5 11L7.2 7H-.2z" fill="#f00"/><rect x="3" y="0" width="1.1" height="9" fill="#f00"/></svg><span class="t t2">(-13)</span></div><div class="c k2"><span class="t">5</span></div><div class="c k3"><svg class="ic" viewBox="0 0 11 11"><rect width="11" height="11" fill="#00f"/><path d="M1 1h9v2h-3v5h3v2h-9v-2h3v-5h-3z" fill="#fff"/></svg><span class="t tn">David Pennekamp (De Goorn)</span></div><div class="c k4"><span class="t">Nederland</span></div><div class="c k5"><span class="t">10.2</span></div><div class="c k6"><svg class="ar ab" viewBox="0 0 7 11"><path d="M3.5 11L7.2 7H-.2z" fill="#f00"/><rect x="3" y="0" width="1.1" height="9" fill="#f00"/></svg></div><div class="c k7"><span class="t">35</span></div><div class="c k8"></div><div class="c k9"><span class="t">236</span></div><div class="c k10"></div><div class="c k11"><span class="t">254.7</span></div><div class="c k12"></div></div>
<div class="r" style="top:758px;height:17px;--o:-1px;--oa:2px;--o2:0px;--ob:3px;--on:-2px;--oi:5px"><div class="c k0"><span class="t">30</span></div><div class="c k1"><svg class="ar" viewBox="0 0 7 11"><path d="M3.5 11L7.2 7H-.2z" fill="#f00"/><rect x="3" y="0" width="1.1" height="9" fill="#f00"/></svg><span class="t t2">(-3)</span></div><div class="c k2"><span class="t">31</span></div><div class="c k3"><svg class="ic" viewBox="0 0 11 11"><rect width="11" height="11" fill="#00f"/><path d="M1 1h9v2h-3v5h3v2h-9v-2h3v-5h-3z" fill="#fff"/></svg><span class="t tn">Mark (Hoogkarspel)</span></div><div class="c k4"><span class="t">Nederland</span></div><div class="c k5"><span class="t">10.5</span></div><div class="c k6"><svg class="ar ab" viewBox="0 0 7 11"><path d="M3.5 0L7.2 4H-.2z" fill="#0f0"/><rect x="3" y="2" width="1.1" height="9" fill="#0f0"/></svg></div><div class="c k7"><span class="t">47</span></div><div class="c k8"></div><div class="c k9"><span class="t">200</span></div><div class="c k10"></div><div class="c k11"><span class="t">254.3</span></div><div class="c k12"></div></div>
<div class="r" style="top:777px;height:18px;--o:0px;--oa:2px;--o2:0px;--ob:3px;--on:-2px;--oi:6px"><div class="c k0"><span class="t">31</span></div><div class="c k1"><svg class="ar" viewBox="0 0 7 11"><path d="M3.5 0L7.2 4H-.2z" fill="#0f0"/><rect x="3" y="2" width="1.1" height="9" fill="#0f0"/></svg><span class="t t2">(+6)</span></div><div class="c k2"><span class="t">131</span></div><div class="c k3"><svg class="ic" viewBox="0 0 11 11"><rect width="11" height="11" fill="#00f"/><path d="M1 1h9v2h-3v5h3v2h-9v-2h3v-5h-3z" fill="#fff"/></svg><span class="t tn">Tim (Monster)</span></div><div class="c k4"><span class="t">Nederland</span></div><div class="c k5"><span class="t">11.0</span></div><div class="c k6"><svg class="ar ab" viewBox="0 0 7 11"><path d="M3.5 0L7.2 4H-.2z" fill="#0f0"/><rect x="3" y="2" width="1.1" height="9" fill="#0f0"/></svg></div><div class="c k7"><span class="t">34</span></div><div class="c k8"></div><div class="c k9"><span class="t">214</span></div><div class="c k10"></div><div class="c k11"><span class="t">254.2</span></div><div class="c k12"></div></div>
<div class="r" style="top:797px;height:17px;--o:-1px;--oa:2px;--o2:0px;--ob:3px;--on:-2px;--oi:5px"><div class="c k0"><span class="t">32</span></div><div class="c k1"><svg class="ar" viewBox="0 0 7 11"><path d="M3.5 0L7.2 4H-.2z" fill="#0f0"/><rect x="3" y="2" width="1.1" height="9" fill="#0f0"/></svg><span class="t t2">(+16)</span></div><div class="c k2"><span class="t">92</span></div><div class="c k3"><svg class="ic" viewBox="0 0 11 11"><rect width="11" height="11" fill="#00f"/><path d="M1 1h9v2h-3v5h3v2h-9v-2h3v-5h-3z" fill="#fff"/></svg><span class="t tn">Maickel (Kerkdriel)</span></div><div class="c k4"><span class="t">Nederland</span></div><div class="c k5"><span class="t g">10.3</span></div><div class="c k6"><svg class="ar ab" viewBox="0 0 7 11"><path d="M3.5 0L7.2 4H-.2z" fill="#0f0"/><rect x="3" y="2" width="1.1" height="9" fill="#0f0"/></svg></div><div class="c k7"><span class="t">52</span></div><div class="c k8"></div><div class="c k9"><span class="t">193</span></div><div class="c k10"></div><div class="c k11"><span class="t">254</span></div><div class="c k12"><span class="t">(249 <b class="rd">+ 5</b>)</span></div></div>
<div class="r" style="top:816px;height:18px;--o:0px;--oa:2px;--o2:0px;--ob:3px;--on:-2px;--oi:6px"><div class="c k0"><span class="t">32</span></div><div class="c k1"><svg class="ar" viewBox="0 0 7 11"><path d="M3.5 0L7.2 4H-.2z" fill="#0f0"/><rect x="3" y="2" width="1.1" height="9" fill="#0f0"/></svg><span class="t t2">(+7)</span></div><div class="c k2"><span class="t">126</span></div><div class="c k3"><svg class="ic" viewBox="0 0 11 11"><rect width="11" height="11" fill="#00f"/><path d="M1 1h9v2h-3v5h3v2h-9v-2h3v-5h-3z" fill="#fff"/></svg><span class="t tn">Pimm (Eindhoven)</span></div><div class="c k4"><span class="t">Nederland</span></div><div class="c k5"><span class="t">10.9</span></div><div class="c k6"><svg class="ar ab" viewBox="0 0 7 11"><path d="M3.5 0L7.2 4H-.2z" fill="#0f0"/><rect x="3" y="2" width="1.1" height="9" fill="#0f0"/></svg></div><div class="c k7"><span class="t">39</span></div><div class="c k8"></div><div class="c k9"><span class="t">209</span></div><div class="c k10"></div><div class="c k11"><span class="t">254</span></div><div class="c k12"></div></div>
<div class="r" style="top:836px;height:17px;--o:-1px;--oa:2px;--o2:0px;--ob:3px;--on:-2px;--oi:5px"><div class="c k0"><span class="t">34</span></div><div class="c k1"><svg class="ar" viewBox="0 0 7 11"><path d="M3.5 0L7.2 4H-.2z" fill="#0f0"/><rect x="3" y="2" width="1.1" height="9" fill="#0f0"/></svg><span class="t t2">(+8)</span></div><div class="c k2"><span class="t">25</span></div><div class="c k3"><svg class="ic" viewBox="0 0 11 11"><rect width="11" height="11" fill="#00f"/><path d="M1 1h9v2h-3v5h3v2h-9v-2h3v-5h-3z" fill="#fff"/></svg><span class="t tn">Jaap (Doorn)</span></div><div class="c k4"><span class="t">Nederland</span></div><div class="c k5"><span class="t">10.4</span></div><div class="c k6"><svg class="ar ab" viewBox="0 0 7 11"><path d="M3.5 0L7.2 4H-.2z" fill="#0f0"/><rect x="3" y="2" width="1.1" height="9" fill="#0f0"/></svg></div><div class="c k7"><span class="t">51</span></div><div class="c k8"></div><div class="c k9"><span class="t">208</span></div><div class="c k10"></div><div class="c k11"><span class="t">253.4</span></div><div class="c k12"></div></div>
<div class="r" style="top:855px;height:18px;--o:0px;--oa:2px;--o2:0px;--ob:3px;--on:-2px;--oi:6px"><div class="c k0"><span class="t">34</span></div><div class="c k1"><svg class="ar" viewBox="0 0 7 11"><path d="M3.5 0L7.2 4H-.2z" fill="#0f0"/><rect x="3" y="2" width="1.1" height="9" fill="#0f0"/></svg><span class="t t2">(+8)</span></div><div class="c k2"><span class="t">13</span></div><div class="c k3"><svg class="ic" viewBox="0 0 11 11"><rect width="11" height="11" fill="#00f"/><path d="M1 1h9v2h-3v5h3v2h-9v-2h3v-5h-3z" fill="#fff"/></svg><span class="t tn">Theo (Utrecht)</span></div><div class="c k4"><span class="t">Nederland</span></div><div class="c k5"><span class="t">10.6</span></div><div class="c k6"><svg class="ar ab" viewBox="0 0 7 11"><path d="M3.5 0L7.2 4H-.2z" fill="#0f0"/><rect x="3" y="2" width="1.1" height="9" fill="#0f0"/></svg></div><div class="c k7"><span class="t">45</span></div><div class="c k8"></div><div class="c k9"><span class="t">211</span></div><div class="c k10"></div><div class="c k11"><span class="t">253.4</span></div><div class="c k12"></div></div>
<div class="r" style="top:875px;height:18px"><div class="c k0"></div><div class="c k1"></div><div class="c k2"></div><div class="c k3"></div><div class="c k4"></div><div class="c k5"></div><div class="c k6"></div><div class="c k7"></div><div class="c k8"></div><div class="c k9"></div><div class="c k10"></div><div class="c k11"></div><div class="c k12"></div></div>
</body>
</html>
